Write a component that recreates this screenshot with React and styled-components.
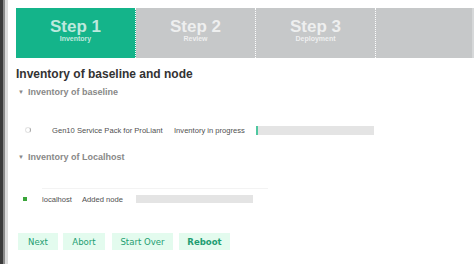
import React from 'react';
import styled, { createGlobalStyle } from 'styled-components';

const GlobalStyle = createGlobalStyle`
  html, body { margin: 0; padding: 0; background: #fff; }
  body { font-family: "Liberation Sans", Arial, sans-serif; }
  * { box-sizing: border-box; }
`;

const Page = styled.div`
  display: flex;
  width: 474px;
  height: 264px;
  overflow: hidden;
`;

const Edge = styled.div`
  width: 8px;
  flex: none;
  background: linear-gradient(to right, #3b3b3b 0, #3b3b3b 3px, #8a8a8a 3px, #8a8a8a 5px, #dcdcdc 5px, #dcdcdc 8px);
`;

const Main = styled.div`
  flex: 1;
  padding: 8px 0 0 8px;
  display: flex;
  flex-direction: column;
`;

const Steps = styled.div`
  display: flex;
  height: 50px;
  background: #c6c8c9;
  border-right: 2px solid #d6d8d9;
`;

const Step = styled.div`
  width: 120px;
  flex: none;
  display: flex;
  flex-direction: column;
  align-items: center;
  justify-content: center;
  padding-bottom: 5px;
  background: ${({ active }) => (active ? '#14b48a' : '#c6c8c9')};
  border-right: 1px dotted #ffffff;
  color: rgba(255, 255, 255, 0.72);
  font-weight: bold;
`;

const StepTitle = styled.div`
  font-size: 17px;
  line-height: 16px;
`;

const StepSub = styled.div`
  font-size: 7px;
  line-height: 7px;
`;

const Title = styled.h1`
  margin: 9px 0 0 0;
  font-size: 12px;
  font-weight: bold;
  color: #333;
`;

const Section = styled.div`
  margin-top: ${({ top }) => top}px;
  font-size: 9px;
  font-weight: bold;
  color: #888;
  display: flex;
  align-items: center;
  gap: 4px;
  padding-left: 2px;
`;

const Caret = styled.span`
  font-size: 6px;
  color: #888;
`;

const Row = styled.div`
  display: flex;
  align-items: center;
  height: 12px;
  margin-top: ${({ top }) => top}px;
  font-size: 7.6px;
  color: #505050;
`;

const Cell = styled.div`
  width: ${({ w }) => w}px;
  flex: none;
  white-space: nowrap;
`;

const Spinner = styled.div`
  width: 6px;
  height: 6px;
  margin-left: 9px;
  border-radius: 50%;
  border: 1px solid #e4e4e4;
  border-right-color: #a8a8a8;
`;

const Square = styled.div`
  width: 4px;
  height: 4px;
  margin-left: 7px;
  background: #3aa53a;
`;

const Bar = styled.div`
  width: ${({ w }) => w}px;
  height: ${({ h }) => h}px;
  background: #e4e4e4;
  border-left: ${({ fill }) => (fill ? '2px solid #4fc8a0' : 'none')};
`;

const Divider = styled.div`
  margin-top: ${({ top }) => top}px;
  margin-left: 26px;
  width: 226px;
  height: 1px;
  background: #f3f3f3;
`;

const Buttons = styled.div`
  display: flex;
  gap: 5px;
  margin-top: 28px;
  padding-left: 2px;
`;

const Button = styled.button`
  border: none;
  height: 17px;
  width: ${({ w }) => w}px;
  padding: 0;
  margin-right: ${({ mr }) => mr || 0}px;
  background: #e3fbee;
  color: #1e9e72;
  font-family: "DejaVu Sans Condensed", "DejaVu Sans", sans-serif;
  font-stretch: condensed;
  font-size: 9.5px;
  font-weight: ${({ bold }) => (bold ? 'bold' : 'normal')};
  cursor: pointer;
`;

export default function App() {
  return (
    <>
      <GlobalStyle />
      <Page>
        <Edge />
        <Main>
          <Steps>
            <Step active>
              <StepTitle>Step 1</StepTitle>
              <StepSub>Inventory</StepSub>
            </Step>
            <Step>
              <StepTitle>Step 2</StepTitle>
              <StepSub>Review</StepSub>
            </Step>
            <Step>
              <StepTitle>Step 3</StepTitle>
              <StepSub>Deployment</StepSub>
            </Step>
          </Steps>
          <Title>Inventory of baseline and node</Title>
          <Section top={6}><Caret>▼</Caret>Inventory of baseline</Section>
          <Row top={27}>
            <Cell w={36}><Spinner /></Cell>
            <Cell w={122}>Gen10 Service Pack for ProLiant</Cell>
            <Cell w={82}>Inventory in progress</Cell>
            <Bar w={118} h={9} fill="1" />
          </Row>
          <Section top={16}><Caret>▼</Caret>Inventory of Localhost</Section>
          <Divider top={26} />
          <Row top={4}>
            <Cell w={26}><Square /></Cell>
            <Cell w={40}>localhost</Cell>
            <Cell w={54}>Added node</Cell>
            <Bar w={117} h={8} />
          </Row>
          <Buttons>
            <Button w={40}>Next</Button>
            <Button w={42} mr={2}>Abort</Button>
            <Button w={61} mr={1}>Start Over</Button>
            <Button w={51} bold>Reboot</Button>
          </Buttons>
        </Main>
      </Page>
    </>
  );
}
